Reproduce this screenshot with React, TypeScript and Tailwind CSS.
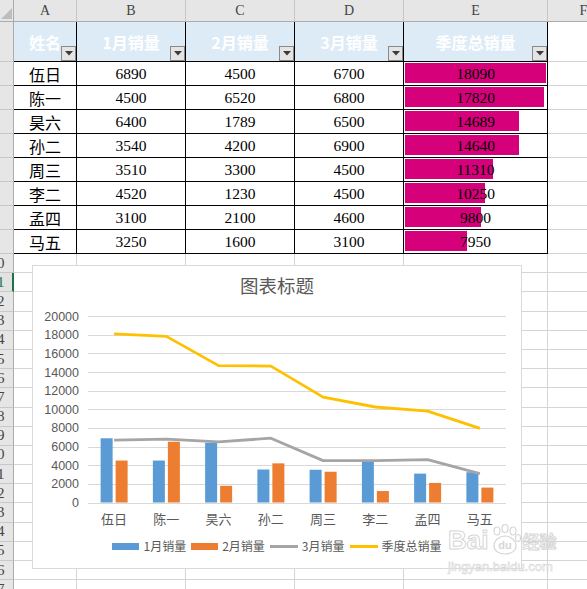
import React from "react"

type Row = {
  name: string
  m1: number
  m2: number
  m3: number
  total: number
  bar: number
}

const rows: Row[] = [
  { name: "伍日", m1: 6890, m2: 4500, m3: 6700, total: 18090, bar: 141 },
  { name: "陈一", m1: 4500, m2: 6520, m3: 6800, total: 17820, bar: 139 },
  { name: "昊六", m1: 6400, m2: 1789, m3: 6500, total: 14689, bar: 114 },
  { name: "孙二", m1: 3540, m2: 4200, m3: 6900, total: 14640, bar: 114 },
  { name: "周三", m1: 3510, m2: 3300, m3: 4500, total: 11310, bar: 88 },
  { name: "李二", m1: 4520, m2: 1230, m3: 4500, total: 10250, bar: 80 },
  { name: "孟四", m1: 3100, m2: 2100, m3: 4600, total: 9800, bar: 76 },
  { name: "马五", m1: 3250, m2: 1600, m3: 3100, total: 7950, bar: 62 },
]

const headers = ["姓名", "1月销量", "2月销量", "3月销量", "季度总销量"]
const letters = ["A", "B", "C", "D", "E", "F"]
const widths = ["w-[63px]", "w-[109px]", "w-[109px]", "w-[109px]", "w-[144px]", "w-[72px]"]

const CJK = "font-['Noto_Sans_CJK_SC',sans-serif]"
const SERIF = "font-['Liberation_Serif','Noto_Sans_CJK_SC',serif]"

// chart geometry, in page coordinates
const X0 = 88
const X1 = 506
const CW = (X1 - X0) / 8
const Y0 = 502.5
const K = 186.4 / 20000
const cx = (i: number) => X0 + CW * (i + 0.5)
const vy = (v: number) => Y0 - v * K

function FilterButton() {
  return (
    <span className="absolute right-0 bottom-0 flex h-[15px] w-[15px] items-center justify-center border border-[#8a8a8a] bg-[#e4e4e4]">
      <svg width="8" height="5" viewBox="0 0 8 5">
        <path d="M0 0h8L4 4.5z" fill="#3c3c3c" />
      </svg>
    </span>
  )
}

function RowHead({ digit, active }: { digit?: string; active?: boolean }) {
  return (
    <div
      className={
        active
          ? "flex w-[14px] shrink-0 items-center overflow-hidden border-r-2 border-b border-r-[#217346] border-b-[#c8c8c8] bg-[#e2e2e2]"
          : "flex w-[14px] shrink-0 items-center overflow-hidden border-r border-b border-r-[#ababab] border-b-[#c8c8c8] bg-[#e6e6e6]"
      }
    >
      {digit && (
        <span
          className={`-ml-[3px] text-[15px] leading-none ${SERIF} ${
            active ? "text-[#217346]" : "text-[#444]"
          }`}
        >
          {digit}
        </span>
      )}
    </div>
  )
}

function Chart() {
  const grid = Array.from({ length: 11 }, (_, i) => i * 2000)
  const line = (vals: number[]) =>
    vals.map((v, i) => `${i === 0 ? "M" : "L"}${cx(i).toFixed(1)} ${vy(v).toFixed(1)}`).join(" ")

  return (
    <div className="absolute top-[265px] left-[32px] flex h-[304px] w-[490px] flex-col border border-[#d9d9d9] bg-white">
      <div className={`flex h-[34px] justify-center pt-[7px] text-[18.5px] leading-[24px] text-[#595959] ${CJK}`}>
        图表标题
      </div>
      <svg width="488" height="230" viewBox="33 300 488 230" className="block">
        {grid.map((v) => (
          <g key={v}>
            <line
              x1={X0}
              x2={X1}
              y1={Math.round(vy(v)) + 0.5}
              y2={Math.round(vy(v)) + 0.5}
              stroke="#d9d9d9"
              strokeWidth="1"
            />
            <text
              x={79}
              y={vy(v) + 0.5}
              textAnchor="end"
              dominantBaseline="central"
              fontFamily="Liberation Sans, sans-serif"
              fontSize="12.5"
              fill="#595959"
            >
              {v}
            </text>
          </g>
        ))}
        {rows.map((r, i) => (
          <g key={r.name}>
            <rect x={cx(i) - 13.5} y={vy(r.m1)} width="12" height={Y0 - vy(r.m1)} fill="#5b9bd5" />
            <rect x={cx(i) + 1.5} y={vy(r.m2)} width="12" height={Y0 - vy(r.m2)} fill="#ed7d31" />
            <text
              x={cx(i)}
              y={518}
              textAnchor="middle"
              dominantBaseline="central"
              fontFamily="Noto Sans CJK SC, sans-serif"
              fontSize="13"
              fill="#595959"
            >
              {r.name}
            </text>
          </g>
        ))}
        <path
          d={line(rows.map((r) => r.m3))}
          fill="none"
          stroke="#a5a5a5"
          strokeWidth="2.8"
          strokeLinejoin="round"
        />
        <path
          d={line(rows.map((r) => r.total))}
          fill="none"
          stroke="#ffc000"
          strokeWidth="2.8"
          strokeLinejoin="round"
        />
      </svg>
      <div className={`flex h-[32px] items-center justify-center gap-[5px] text-[12px] text-[#595959] ${CJK}`}>
        <div className="flex items-center gap-[4px]">
          <span className="h-[7px] w-[27px] bg-[#5b9bd5]" />
          1月销量
        </div>
        <div className="flex items-center gap-[4px]">
          <span className="h-[7px] w-[27px] bg-[#ed7d31]" />
          2月销量
        </div>
        <div className="flex items-center gap-[4px]">
          <span className="h-[3px] w-[28px] bg-[#a5a5a5]" />
          3月销量
        </div>
        <div className="flex items-center gap-[4px]">
          <span className="h-[3px] w-[28px] bg-[#ffc000]" />
          季度总销量
        </div>
      </div>
    </div>
  )
}

function Watermark() {
  return (
    <div className="pointer-events-none absolute top-[524px] left-[448px] flex flex-col items-start">
      <div className="flex items-center">
        <span className="font-['Liberation_Sans',sans-serif] text-[26px] leading-none font-bold text-white/60 [-webkit-text-stroke:1px_#d6d6d6]">
          Bai
        </span>
        <svg width="32" height="32" viewBox="0 0 32 32" className="mx-[1px]">
          <g fill="none" stroke="#d6d6d6" strokeWidth="1.2">
            <ellipse cx="8" cy="7" rx="3" ry="4" />
            <ellipse cx="16" cy="4.5" rx="3" ry="4" />
            <ellipse cx="24" cy="7" rx="3" ry="4" />
            <ellipse cx="29" cy="14" rx="2.5" ry="3.5" />
            <path d="M5 22c0-6 6-10 11-10s11 4 11 10c0 5-5 8-11 8S5 27 5 22z" />
          </g>
          <text x="16" y="25" textAnchor="middle" fontFamily="Liberation Sans, sans-serif" fontSize="11" fontWeight="bold" fill="#d6d6d6">
            du
          </text>
        </svg>
        <span className={`text-[17px] leading-none font-bold text-white/60 [-webkit-text-stroke:1px_#d6d6d6] ${CJK}`}>
          经验
        </span>
      </div>
      <span className="mt-[4px] font-['Liberation_Sans',sans-serif] text-[13px] leading-none text-white/60 [-webkit-text-stroke:0.6px_#d6d6d6]">
        jingyan.baidu.com
      </span>
    </div>
  )
}

export default function App() {
  const lower = Array.from({ length: 18 }, (_, i) => i + 10)

  return (
    <div className="relative h-[589px] w-[587px] overflow-hidden bg-white">
      {/* column letters */}
      <div className="flex h-[22px] border-b border-[#ababab] bg-[#e6e6e6]">
        <div className="flex w-[14px] shrink-0 items-end justify-end border-r border-[#ababab] pr-[1px] pb-[2px]">
          <svg width="11" height="11" viewBox="0 0 11 11">
            <path d="M11 0v11H0z" fill="#bdbdbd" />
          </svg>
        </div>
        {letters.map((l, i) => (
          <div
            key={l}
            className={`${widths[i]} flex shrink-0 items-center justify-center border-r border-[#c6c6c6] text-[14px] text-[#444] ${SERIF}`}
          >
            {l}
          </div>
        ))}
      </div>

      {/* table header */}
      <div className="flex h-[40px]">
        <RowHead />
        {headers.map((h, i) => (
          <div
            key={h}
            className={`${widths[i]} relative flex shrink-0 items-center justify-center border-r border-b border-black bg-[#ddebf7] text-[16px] font-bold text-white ${CJK}`}
          >
            {h}
            <FilterButton />
          </div>
        ))}
        <div className={`${widths[5]} shrink-0 border-b border-[#d4d4d4]`} />
      </div>

      {/* data */}
      {rows.map((r) => (
        <div key={r.name} className="flex h-[24px]">
          <RowHead />
          <div className={`${widths[0]} flex shrink-0 items-center justify-center border-r border-b border-black text-[16px] text-black ${CJK}`}>
            {r.name}
          </div>
          {[r.m1, r.m2, r.m3].map((v, i) => (
            <div
              key={i}
              className={`${widths[i + 1]} flex shrink-0 items-center justify-center border-r border-b border-black text-[15.5px] text-black ${SERIF}`}
            >
              {v}
            </div>
          ))}
          <div className={`${widths[4]} relative flex shrink-0 items-center justify-center border-r border-b border-black text-[15.5px] text-black ${SERIF}`}>
            <span className="absolute top-[1px] left-[1px] h-[20px] bg-[#d6007b]" style={{ width: r.bar }} />
            <span className="relative">{r.total}</span>
          </div>
          <div className={`${widths[5]} shrink-0 border-b border-[#d4d4d4]`} />
        </div>
      ))}

      {/* empty sheet rows */}
      {lower.map((n) => (
        <div key={n} className="flex h-[19.2px]">
          <RowHead digit={String(n % 10)} active={n === 11} />
          {widths.map((w, i) => (
            <div key={i} className={`${w} shrink-0 border-r border-b border-[#d4d4d4]`} />
          ))}
        </div>
      ))}

      <Chart />
      <Watermark />
    </div>
  )
}
